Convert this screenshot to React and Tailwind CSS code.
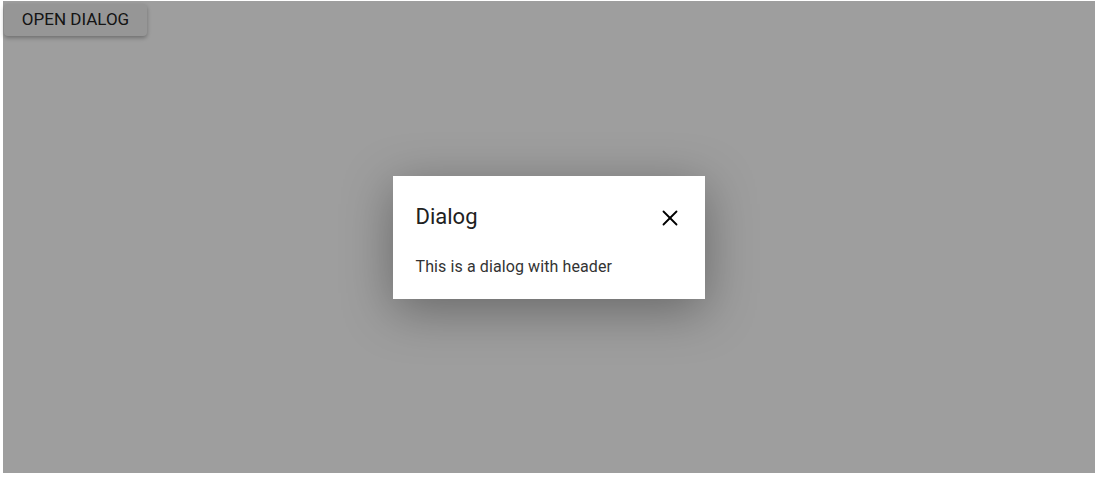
import React from 'react';
import { X } from 'lucide-react';

const App = () => {
  return (
    <div className="w-[1097px] h-[477px] bg-white font-['Roboto',sans-serif] pl-[3px] pr-[2px] pt-px pb-1">
      <div className="relative w-full h-full bg-white">
        <button className="ml-px mt-[3px] h-[32px] w-[143px] bg-[#f3f3f3] text-[#222222] text-[17px] rounded-sm shadow-[0_2px_4px_rgba(0,0,0,0.3)]">
          OPEN DIALOG
        </button>

        <div className="absolute inset-0 bg-[rgba(0,0,0,0.38)] flex items-center justify-center">
          <div className="w-[312px] h-[123px] bg-white pl-[23px] pr-[24px] pt-[26px] shadow-[0_11px_50px_rgba(0,0,0,0.35)] ml-[-1px]">
            <div className="flex items-center justify-between">
              <span className="text-[22px] text-[#212121] leading-[30px]">Dialog</span>
              <X size={26} strokeWidth={1.7} className="text-black mt-[2px] mr-[-2px]" />
            </div>
            <p className="mt-[25px] text-[16px] tracking-[0.1px] text-[#333333] leading-[20px]">This is a dialog with header</p>
          </div>
        </div>
      </div>
    </div>
  );
};

export default App;
